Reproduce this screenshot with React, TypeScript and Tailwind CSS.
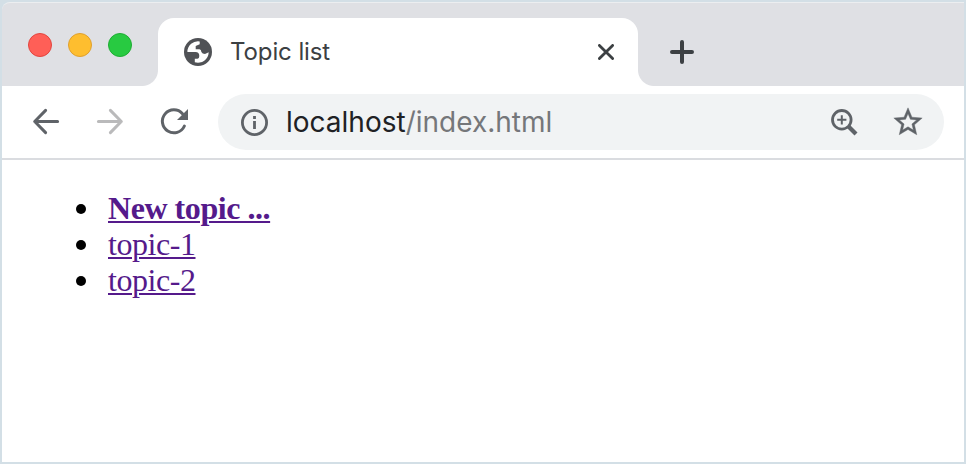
const ui = "font-['Inter',sans-serif]";

function TabStrip() {
  return (
    <div className="flex h-[84px] items-end rounded-tl-lg border-t border-[#eceef0] bg-[#dfe0e4]">
      <div className="flex h-full w-[156px] items-start gap-4 pt-[30px] pl-[26px]">
        <span className="size-6 rounded-full border border-[#e2453f] bg-[#ff5f57]" />
        <span className="size-6 rounded-full border border-[#e0a02e] bg-[#febe2f]" />
        <span className="size-6 rounded-full border border-[#1fad34] bg-[#28ca41]" />
      </div>
      <div className="-ml-4 size-4 bg-[radial-gradient(circle_at_0_0,#dfe0e4_15.5px,#fff_16.5px)]" />
      <div className="flex h-[68px] w-[480px] items-center rounded-t-2xl bg-white pl-[26px]">
        <svg viewBox="0 0 28 28" className="size-7 shrink-0">
          <circle cx="14" cy="14" r="14" fill="#505256" />
          <path
            fill="#fff"
            d="M3.4 14A10.7 10.7 0 0 1 15.7 3.4V6.2L11.7 8V11.3H15.5Q17.2 11.5 17.4 14Q18.3 16 21 16L24.7 14.2A10.7 10.7 0 0 1 10.8 24.2V20.7H13.5Q15.3 20.5 15.3 18Q15.3 14 11.5 14Z"
          />
        </svg>
        <span className={`${ui} ml-[18px] text-[24px] tracking-[-0.1px] text-[#3c4043]`}>Topic list</span>
        <svg viewBox="0 0 16 16" className="mr-6 ml-auto size-4 shrink-0" fill="none" stroke="#3c4043" strokeWidth="2.8" strokeLinecap="round">
          <path d="M1.4 1.4 14.6 14.6M14.6 1.4 1.4 14.6" />
        </svg>
      </div>
      <div className="size-4 bg-[radial-gradient(circle_at_100%_0,#dfe0e4_15.5px,#fff_16.5px)]" />
      <svg viewBox="0 0 24 24" className="mb-[22px] ml-4 size-6" fill="none" stroke="#3c4043" strokeWidth="4" strokeLinecap="round">
        <path d="M12 2V22M2 12H22" />
      </svg>
    </div>
  );
}

function Toolbar() {
  return (
    <div className="flex h-[74px] items-center border-b-2 border-[#dadce0] bg-white pr-5 pl-[30px]">
      <svg viewBox="0 0 28 28" className="size-7" fill="none" stroke="#5f6368" strokeWidth="3" strokeLinecap="round" strokeLinejoin="round">
        <path d="M25.6 13.5H2.8M13.6 2.4 2.7 13.5 13.6 24.6" />
      </svg>
      <svg viewBox="0 0 28 28" className="ml-9 size-7" fill="none" stroke="#bababb" strokeWidth="3" strokeLinecap="round" strokeLinejoin="round">
        <path d="M2.4 13.5H25.2M14.4 2.4 25.3 13.5 14.4 24.6" />
      </svg>
      <svg viewBox="0 0 28 28" className="ml-9 size-7" fill="none" stroke="#5f6368" strokeWidth="3" strokeLinecap="round">
        <path d="M22.5 5.7A11.5 11.5 0 1 0 24.4 18" />
        <path d="M28 1V12H17Z" fill="#5f6368" stroke="none" />
      </svg>
      <div className="ml-[30px] flex h-14 flex-1 items-center rounded-full bg-[#f1f3f4] pr-[19px] pl-[23px]">
        <svg viewBox="0 0 27 27" className="size-[27px] shrink-0" fill="none" stroke="#5f6368" strokeWidth="2.8">
          <circle cx="13.5" cy="13.5" r="12.1" />
          <path d="M13.5 12V20M13.5 7V10" />
        </svg>
        <span className={`${ui} ml-[18px] text-[28px] text-[#202124]`}>
          localhost<span className="text-[#75777a]">/index.html</span>
        </span>
        <svg viewBox="0 0 27 27" className="ml-auto size-[27px] shrink-0" fill="none" stroke="#5f6368" strokeWidth="2.8">
          <circle cx="10.8" cy="10.8" r="9.3" />
          <path d="M17.5 17.5 25 25" strokeWidth="4.2" />
          <path d="M10.8 6.2V15.4M6.2 10.8H15.4" strokeWidth="2" />
        </svg>
        <svg viewBox="0 0 24 24" className="ml-[33px] size-[34px] shrink-0" fill="#5f6368" stroke="#5f6368" strokeWidth="0.3">
          <path d="M22 9.24l-7.19-.62L12 2 9.19 8.63 2 9.24l5.46 4.73L5.82 21 12 17.27 18.18 21l-1.63-7.03L22 9.24zM12 15.4l-3.76 2.27 1-4.28-3.32-2.88 4.38-.38L12 6.1l1.71 4.04 4.38.38-3.32 2.88 1 4.28L12 15.4z" />
        </svg>
      </div>
    </div>
  );
}

const topics = ["topic-1", "topic-2"];

export default function App() {
  return (
    <div className="h-[464px] w-[966px] overflow-hidden border-2 border-[#d3dfe6] bg-[#d3dfe6]">
      <div className="flex h-full flex-col">
        <TabStrip />
        <Toolbar />
        <main className="flex-1 bg-white pt-[30px] pl-[74px] font-['Liberation_Serif',serif] text-[32px] leading-9 tracking-[-0.45px] text-[#551a8b]">
          <ul>
            <li className="flex items-center gap-[22px]">
              <span className="mt-[2px] size-[10px] rounded-full bg-black" />
              <a className="font-bold underline decoration-2 underline-offset-2">New topic ...</a>
            </li>
            {topics.map((t) => (
              <li key={t} className="flex items-center gap-[22px]">
                <span className="mt-[2px] size-[10px] rounded-full bg-black" />
                <a className="underline decoration-2 underline-offset-2">{t}</a>
              </li>
            ))}
          </ul>
        </main>
      </div>
    </div>
  );
}
